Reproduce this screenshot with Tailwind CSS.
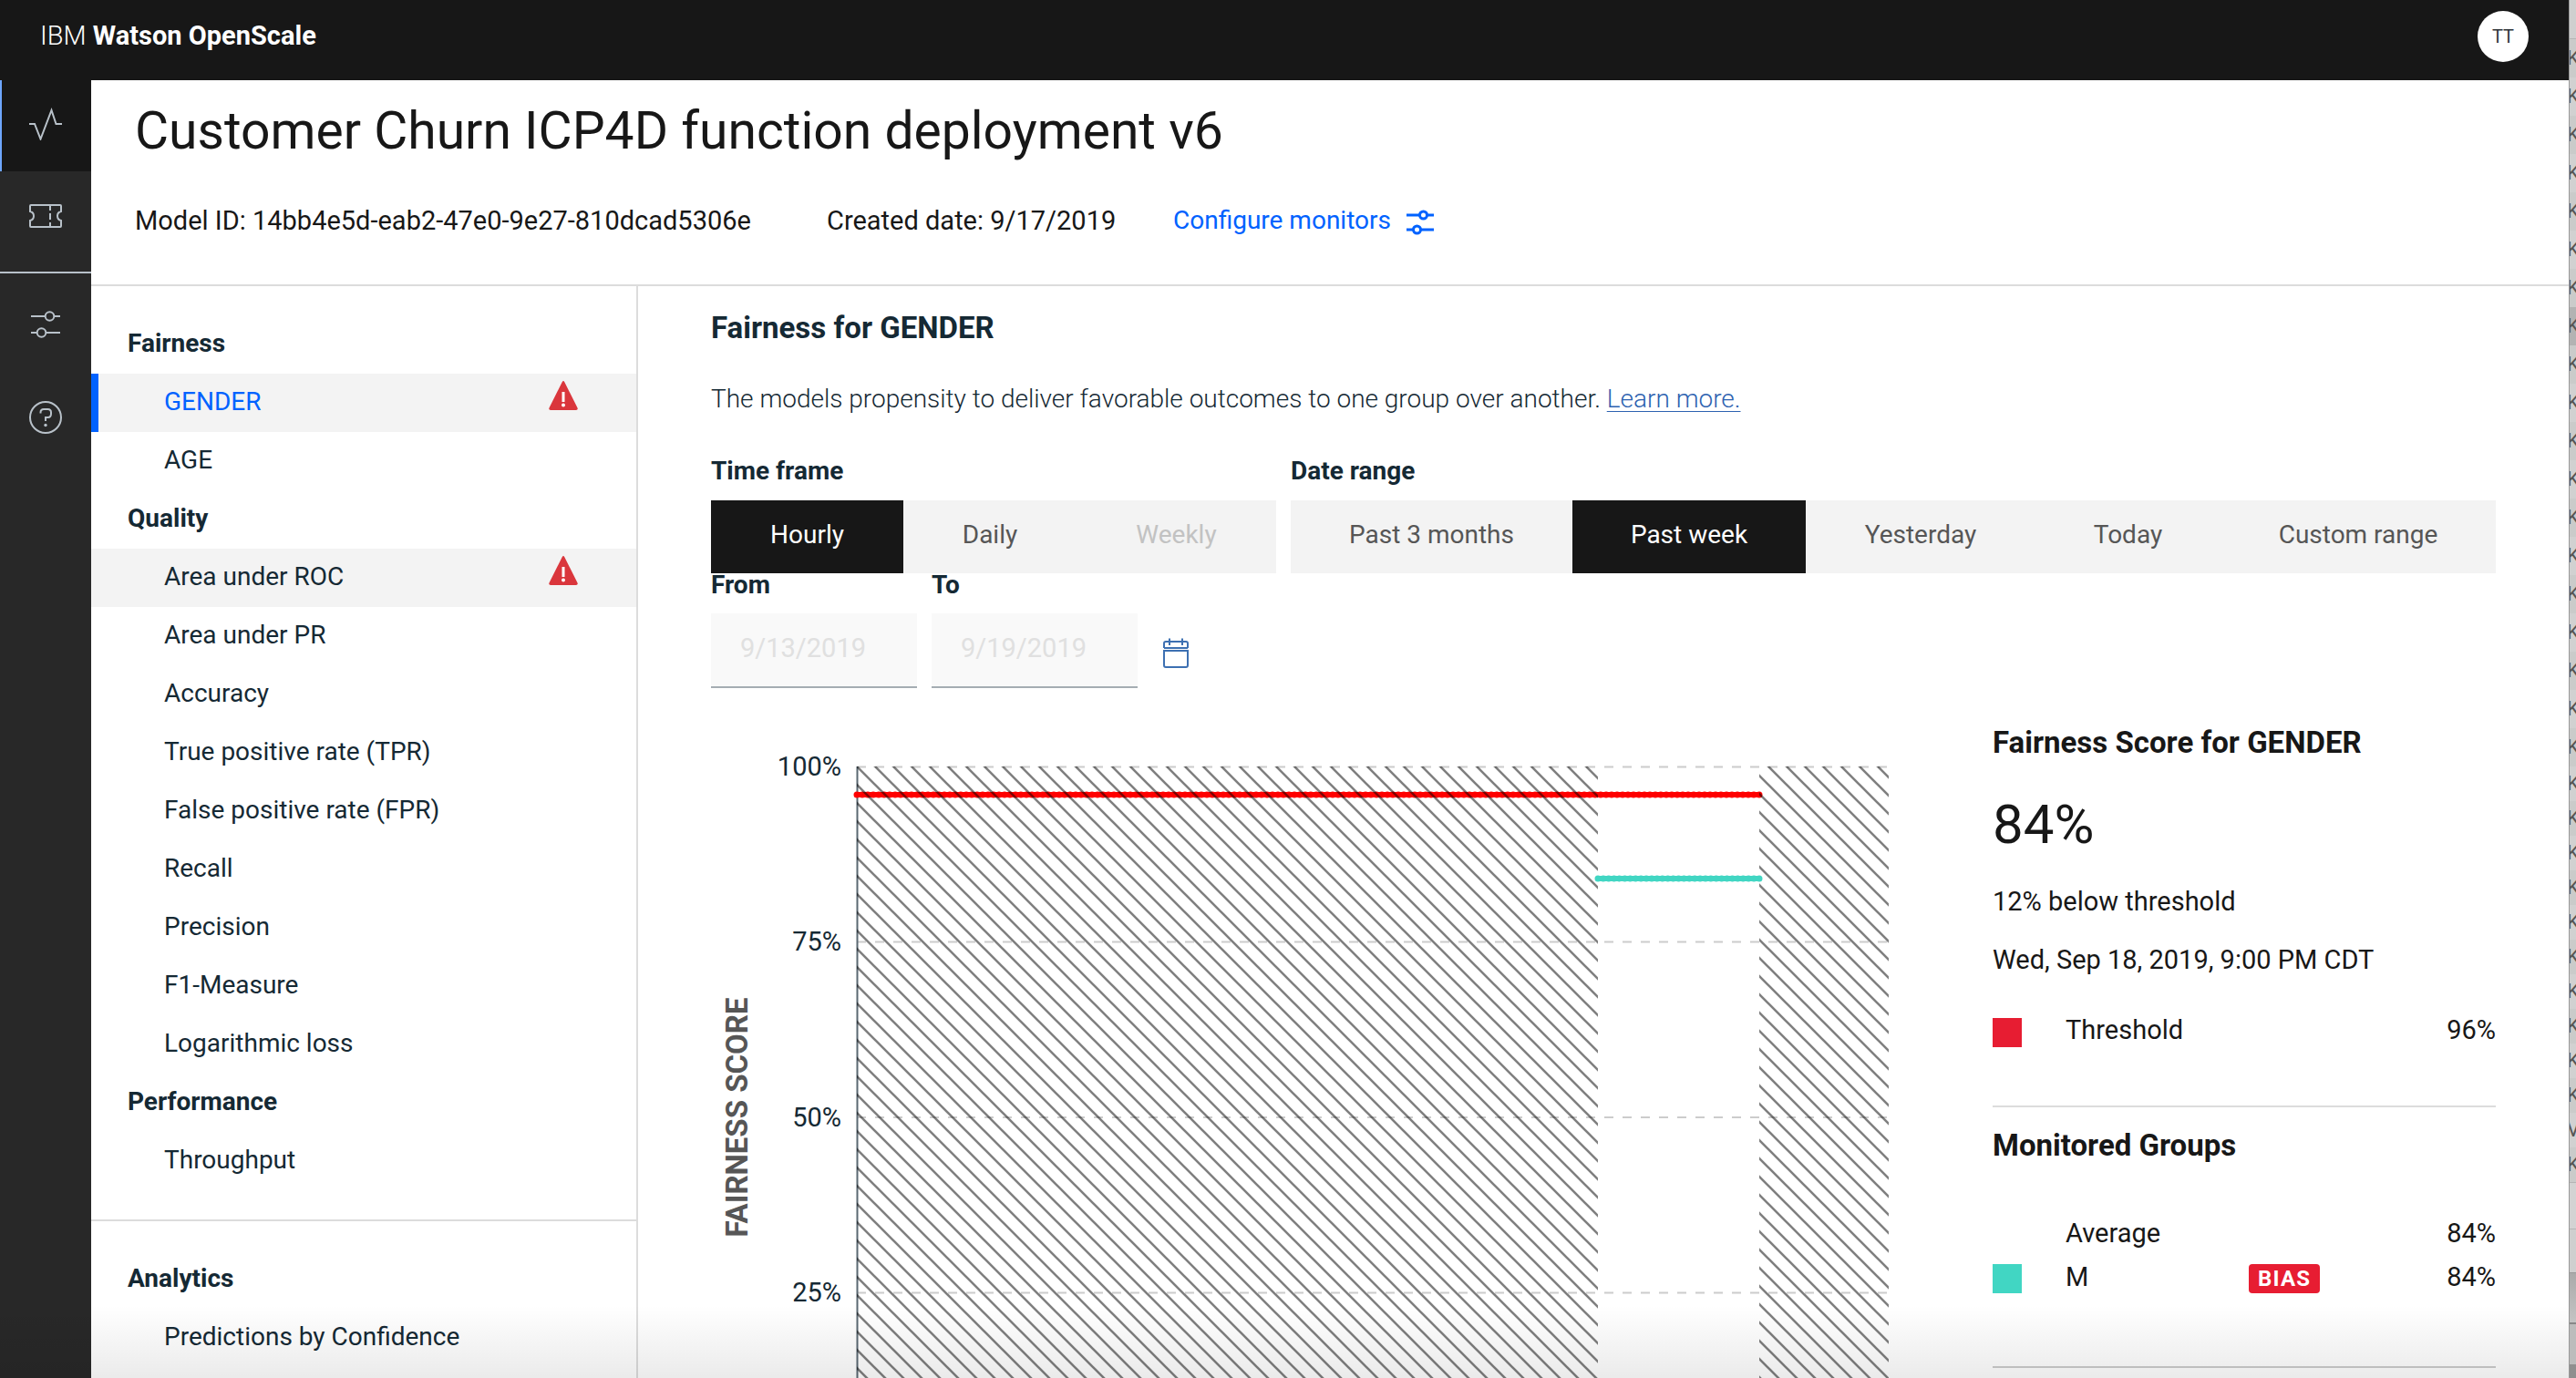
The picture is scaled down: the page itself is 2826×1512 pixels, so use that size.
<!DOCTYPE html>
<html lang="en">
<head>
<meta charset="utf-8">
<title>IBM Watson OpenScale</title>
<script src="https://cdn.jsdelivr.net/npm/@tailwindcss/browser@4"></script>
</head>
<body class="flex h-screen overflow-hidden bg-white font-['Roboto',sans-serif] text-[28px] leading-8 text-[#171717]">
<div class="relative flex min-w-0 flex-1 flex-col">
  <header class="flex h-[88px] shrink-0 items-start justify-between bg-[#171717] pr-11 pl-11 text-white">
    <a href="#" class="text-[29px] leading-[78px]"><span class="font-light">IBM</span> <span class="font-bold">Watson OpenScale</span></a>
    <button class="mt-3 size-14 rounded-full bg-white text-xl text-[#2d3338]">TT</button>
  </header>

  <div class="flex min-h-0 flex-1">
    <nav aria-label="Main" class="w-[100px] shrink-0 bg-[#282828] text-[#b8c1c9]">
      <a href="#" aria-label="Insights" class="flex h-[100px] items-center border-l-2 border-[#6ea6ff] bg-[#171717] pb-1 pl-[30px]">
        <svg class="size-9" viewBox="0 0 36 36" fill="none" stroke="currentColor" stroke-width="2"><path d="M0 18H6L12.500 34.500 24.500 3 29.500 18H36"/></svg>
      </a>
      <a href="#" aria-label="Tickets" class="flex h-28 items-center justify-center border-b-2 border-[#b8c1c9] pb-3">
        <svg class="size-9" viewBox="0 0 36 36" fill="none" stroke="currentColor" stroke-width="2"><path d="M1 7q0-1 1-1H34q1 0 1 1v6q-4 1-4 5t4 5v6q0 1-1 1H2q-1 0-1-1v-6q4-1 4-5T1 13z"/><path d="M23 6v6M23 15v7M23 25v5"/></svg>
      </a>
      <a href="#" aria-label="Configure" class="flex h-28 items-center justify-center">
        <svg class="size-9" viewBox="0 0 36 36" fill="none" stroke="currentColor" stroke-width="2"><path d="M2 9H17.500M27.500 9H34M2 27H8.500M18.500 27H34"/><circle cx="22.500" cy="9" r="4.800"/><circle cx="13.500" cy="27" r="4.800"/></svg>
      </a>
      <a href="#" aria-label="Help" class="flex h-[92px] items-center justify-center">
        <svg class="size-9" viewBox="0 0 36 36" fill="none" stroke="currentColor" stroke-width="2"><circle cx="18" cy="18" r="17"/><path d="M12.500 13.500v-1q0-3.500 3.500-3.500h4.500q3.500 0 3.500 3.500v1.500q0 4-3.500 4h-2.500v4"/><circle cx="18" cy="26.500" r="1.700" fill="currentColor" stroke="none"/></svg>
      </a>
    </nav>

    <div class="flex min-w-0 flex-1 flex-col">
      <div class="shrink-0 border-b-2 border-[#dcdcdc] pt-6 pb-[54px] pl-12">
        <h1 class="text-[57px] leading-16">Customer Churn ICP4D function deployment v6</h1>
        <div class="mt-[50px] flex text-[29px]">
          <p class="w-[759px]">Model ID: 14bb4e5d-eab2-47e0-9e27-810dcad5306e</p>
          <p class="w-[380px]">Created date: 9/17/2019</p>
          <a href="#" class="flex items-center gap-4 text-[28px] text-[#0062ff]">Configure monitors
            <svg class="size-8" viewBox="0 0 32 32" fill="none" stroke="currentColor" stroke-width="3"><path d="M1 10H15M24 10H31M1 26H8M17 26H31"/><circle cx="19.500" cy="10" r="4"/><circle cx="12.500" cy="26" r="4"/></svg>
          </a>
        </div>
      </div>

      <div class="flex min-h-0 flex-1">
        <nav aria-label="Metrics" class="w-[600px] shrink-0 border-r-2 border-[#dcdcdc] text-[#152934]">
          <div class="border-b-2 border-[#dcdcdc] py-8 leading-[61px] *:pb-[3px]">
            <h2 class="pl-10 font-bold">Fairness</h2>
            <a href="#" class="flex justify-between border-l-8 border-[#0062ff] bg-[#f3f3f3] pr-16 pl-18 text-[#0062ff]">GENDER
              <svg class="mt-2 size-8" viewBox="0 0 32 32"><path d="M14.800 1q1.200-2 2.400 0L31.500 29.500q.8 2.500-1.500 2.500H2q-2.300 0-1.500-2.500z" fill="#da363c"/><path d="M16 12v11" stroke="#fff" stroke-width="3"/><circle cx="16" cy="26.500" r="2" fill="#fff"/></svg>
            </a>
            <a href="#" class="block pl-20">AGE</a>
            <h2 class="pl-10 font-bold">Quality</h2>
            <a href="#" class="flex justify-between bg-[#f3f3f3] pr-16 pl-20">Area under ROC
              <svg class="mt-2 size-8" viewBox="0 0 32 32"><path d="M14.800 1q1.200-2 2.400 0L31.500 29.500q.8 2.500-1.500 2.500H2q-2.300 0-1.500-2.500z" fill="#da363c"/><path d="M16 12v11" stroke="#fff" stroke-width="3"/><circle cx="16" cy="26.500" r="2" fill="#fff"/></svg>
            </a>
            <a href="#" class="block pl-20">Area under PR</a>
            <a href="#" class="block pl-20">Accuracy</a>
            <a href="#" class="block pl-20">True positive rate (TPR)</a>
            <a href="#" class="block pl-20">False positive rate (FPR)</a>
            <a href="#" class="block pl-20">Recall</a>
            <a href="#" class="block pl-20">Precision</a>
            <a href="#" class="block pl-20">F1-Measure</a>
            <a href="#" class="block pl-20">Logarithmic loss</a>
            <h2 class="pl-10 font-bold">Performance</h2>
            <a href="#" class="block pl-20">Throughput</a>
          </div>
          <div class="pt-8 leading-[61px] *:pb-[3px]">
            <h2 class="pl-10 font-bold">Analytics</h2>
            <a href="#" class="block pl-20">Predictions by Confidence</a>
          </div>
        </nav>

        <main class="min-w-0 flex-1 px-20 pt-7">
          <h2 class="text-[33px] leading-9 font-bold text-[#152934]">Fairness for GENDER</h2>
          <p class="mt-11 font-light text-[#152934]">The models propensity to deliver favorable outcomes to one group over another. <a href="#" class="text-[#2d62b0] underline decoration-1 underline-offset-4">Learn more.</a></p>

          <div class="mt-[47px] grid grid-cols-[620px_1fr] gap-4">
            <div>
              <h3 class="font-bold text-[#152934]">Time frame</h3>
              <div class="mt-4 grid h-20 grid-cols-[211fr_190fr_219fr] bg-[#f3f3f3] text-[#565656] *:pb-1">
                <button class="bg-[#171717] text-white">Hourly</button>
                <button>Daily</button>
                <button disabled class="text-[#c2c2c2]">Weekly</button>
              </div>
            </div>
            <div>
              <h3 class="font-bold text-[#152934]">Date range</h3>
              <div class="mt-4 grid h-20 grid-cols-[309fr_256fr_252fr_203fr_302fr] bg-[#f3f3f3] text-[#565656] *:pb-1">
                <button>Past 3 months</button>
                <button class="bg-[#171717] text-white">Past week</button>
                <button>Yesterday</button>
                <button>Today</button>
                <button>Custom range</button>
              </div>
            </div>
          </div>

          <div class="flex gap-4">
            <div class="w-[226px]">
              <label for="from" class="block leading-[26px] font-bold text-[#152934]">From</label>
              <input id="from" disabled value="9/13/2019" class="mt-[18px] block h-[82px] w-full border-b-2 border-[#a5adb3] bg-[#f9f9f9] px-8 pb-1 text-[29px] text-[#e0e0e0]">
            </div>
            <div class="w-[226px]">
              <label for="to" class="block leading-[26px] font-bold text-[#152934]">To</label>
              <input id="to" disabled value="9/19/2019" class="mt-[18px] block h-[82px] w-full border-b-2 border-[#a5adb3] bg-[#f9f9f9] px-8 pb-1 text-[29px] text-[#e0e0e0]">
            </div>
            <button aria-label="Open calendar" class="mt-[70px] ml-2 self-start text-[#3d70b2]">
              <svg class="size-9" viewBox="0 0 36 36" fill="none" stroke="currentColor" stroke-width="2"><path d="M5 12V7q0-2 2-2H29q2 0 2 2v5M5 12H31M5 15H31V31q0 2-2 2H7q-2 0-2-2zM11 1.500V9M25 1.500V9"/></svg>
            </button>
          </div>

          <div class="mt-[45px] grid grid-cols-[1fr_552px] gap-28">
            <svg class="h-auto w-full" viewBox="0 0 1294 820" role="img" aria-label="Fairness score over the past week">
              <defs>
                <pattern id="hatch" x="160" y="41" width="20" height="20" patternUnits="userSpaceOnUse">
                  <path d="M-2 -2L22 22M-2 18L2 22M18 -2L22 2" stroke="#000" stroke-opacity=".5" stroke-width="2.600"/>
                </pattern>
              </defs>
              <g fill="#152934" font-size="29" text-anchor="end">
                <text x="143" y="51">100%</text>
                <text x="143" y="243">75%</text>
                <text x="143" y="436">50%</text>
                <text x="143" y="628">25%</text>
              </g>
              <text transform="translate(40 426) rotate(-90)" text-anchor="middle" font-size="33" font-weight="700" fill="#565656">FAIRNESS SCORE</text>
              <path d="M160 41.500H1292M160 233.500H1292M160 426H1292M160 618.500H1292M160 811H1292" stroke="#ccc" stroke-width="2" stroke-dasharray="10 10"/>
              <path d="M160.500 41V811" stroke="#5a6872" stroke-width="2"/>
              <path d="M160 72H1150" stroke="#f00" stroke-width="6"/>
              <path d="M160 72H1151" stroke="#f00" stroke-width="7" stroke-linecap="round" stroke-dasharray="0 6"/>
              <path d="M160 41H973V811H160zM1150 41H1292V811H1150z" fill="url(#hatch)"/>
              <path d="M973 164H1150" stroke="#41d6c3" stroke-width="6"/>
              <path d="M973 164H1151" stroke="#41d6c3" stroke-width="7" stroke-linecap="round" stroke-dasharray="0 5.900"/>
            </svg>

            <aside class="text-[29px]">
              <h2 class="text-[33px] leading-[30px] font-bold">Fairness Score for GENDER</h2>
              <p class="mt-[43px] text-[60px] leading-16">84%</p>
              <p class="mt-9">12% below threshold</p>
              <p class="mt-8">Wed, Sep 18, 2019, 9:00 PM CDT</p>
              <dl class="mt-12 flex border-b-2 border-[#dcdcdc] pb-16 leading-[26px]">
                <dt class="flex flex-1 gap-12"><span class="size-8 bg-[#e71d32]"></span>Threshold</dt>
                <dd>96%</dd>
              </dl>
              <h2 class="mt-6 text-[33px] leading-9 font-bold">Monitored Groups</h2>
              <dl class="mt-16 grid grid-cols-[281px_1fr_auto] gap-y-4 border-b-2 border-[#ccc] pb-20 leading-7">
                <dt class="col-span-2 h-8 pl-20">Average</dt>
                <dd>84%</dd>
                <dt class="flex gap-12"><span class="size-8 bg-[#41d6c3]"></span>M</dt>
                <dd><span class="inline-block h-8 rounded bg-[#e71d32] px-[10px] text-2xl leading-8 font-bold tracking-wider text-white">BIAS</span></dd>
                <dd>84%</dd>
              </dl>
            </aside>
          </div>
        </main>
      </div>
    </div>
  </div>
  <div class="pointer-events-none absolute inset-x-0 bottom-0 h-20 bg-linear-to-b from-transparent to-black/8"></div>
</div>

<!-- Edge of the window lying behind -->
<div id="behind" aria-hidden="true" class="w-2 shrink-0 overflow-hidden border-l border-[#999] bg-[#cdcdcd] text-[22px] text-[#555]"></div>
<script>
  const strip = document.getElementById('behind');
  const add = (cls, text = '') => {
    const row = document.createElement('div');
    row.className = cls;
    row.textContent = text;
    strip.append(row);
  };
  add('h-[43px] border-b border-[#b5b5b5] bg-[#cfcfcf]');
  for (let i = 1; i < 20; i++) add('h-[42px] -indent-[3px] leading-[42px] ' + (i === 8 ? 'bg-[#b3b3b3]' : i % 2 ? 'bg-[#cacbca]' : 'bg-[#d1d1d1]'), 'K');
  for (let i = 0; i < 12; i++) add('h-[38px] -indent-[3px] leading-[38px] ' + (i % 2 ? 'bg-[#cacbca]' : 'bg-[#d1d1d1]'), i === 10 ? 'V' : 'K');
  add('h-[52px] border-y border-[#b5b5b5] bg-[#d3d3d3]');
  add('h-12 border-b border-[#999] bg-[#cfcfcf]');
  add('h-14 border-b-2 border-[#888] bg-linear-to-b from-[#aaa] to-[#c4c4c4]');
  add('h-11 bg-[#bcbcbc]');
  add('h-4 bg-[#8f8f8f]');
</script>
</body>
</html>
